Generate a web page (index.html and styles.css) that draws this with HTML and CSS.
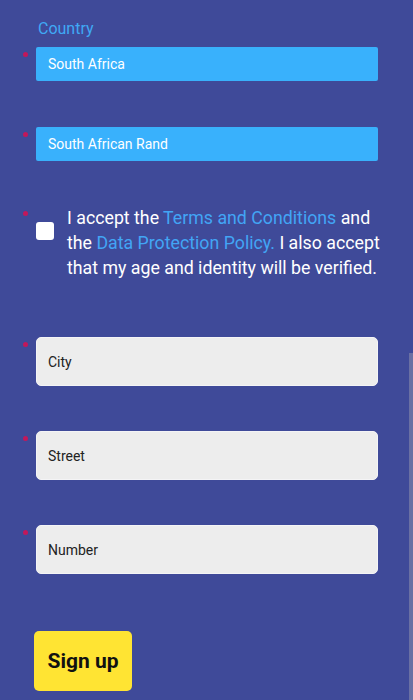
FILE: index.html
```html
<!DOCTYPE html>
<html lang="en">
<head>
    <meta charset="UTF-8">
    <meta name="viewport" content="width=device-width, initial-scale=1.0">
    <title>Sign up</title>
    <link rel="stylesheet" href="styles.css">
</head>
<body>
    <form class="signup-form">
        <label class="field-label">Country</label>
        <div class="field required">
            <select class="select">
                <option>South Africa</option>
            </select>
        </div>
        <div class="field required spaced">
            <select class="select">
                <option>South African Rand</option>
            </select>
        </div>
        <div class="field required terms">
            <input type="checkbox" class="checkbox">
            <p>I accept the <a href="#">Terms and Conditions</a> and the <a href="#">Data Protection Policy.</a> I also accept that my age and identity will be verified.</p>
        </div>
        <div class="field required city">
            <input type="text" class="input" value="City">
        </div>
        <div class="field required next">
            <input type="text" class="input" value="Street">
        </div>
        <div class="field required next">
            <input type="text" class="input" value="Number">
        </div>
        <button type="button" class="signup">Sign up</button>
    </form>
    <div class="scroll-thumb"></div>
</body>
</html>
```

FILE: styles.css
```css
body {
    margin: 0;
    background-color: #3f4a99;
    font-family: Roboto, 'Liberation Sans', sans-serif;
    color: #fff;
    overflow: hidden;
}
.signup-form {
    padding: 19px 35px 0 36px;
}
.field-label {
    display: block;
    height: 20px;
    line-height: 20px;
    margin-bottom: 8px;
    padding-left: 2px;
    font-size: 16px;
    color: #3fa9f5;
}
.field {
    position: relative;
}
.required::before {
    content: '';
    position: absolute;
    left: -13px;
    top: 5px;
    width: 5px;
    height: 5px;
    border-radius: 50%;
    background-color: #c2185b;
}
.spaced {
    margin-top: 46px;
}
.select {
    display: block;
    width: 100%;
    height: 34px;
    margin: 0;
    padding: 0 12px;
    border: none;
    border-radius: 2px;
    background-color: #39b1fc;
    color: #fff;
    font-family: inherit;
    font-size: 14px;
    appearance: none;
    -webkit-appearance: none;
    outline: none;
}
.terms {
    display: flex;
    gap: 13px;
    margin-top: 45px;
    margin-right: -8px;
}
.checkbox {
    flex: none;
    width: 18px;
    height: 18px;
    margin: 16px 0 0;
    border-radius: 3px;
    background-color: #fff;
    appearance: none;
    -webkit-appearance: none;
}
.terms p {
    margin: 0;
    font-size: 17.75px;
    line-height: 25px;
}
.terms a {
    color: #42a5f5;
    text-decoration: none;
}
.city {
    margin-top: 56px;
}
.next {
    margin-top: 45px;
}
.input {
    display: block;
    width: 100%;
    height: 49px;
    margin: 0;
    padding: 0 11px;
    box-sizing: border-box;
    border: 1px solid #f4f4f6;
    border-radius: 5px;
    background-color: #ededed;
    color: #222;
    font-family: inherit;
    font-size: 14px;
    outline: none;
}
.signup {
    display: block;
    width: 98px;
    height: 60px;
    margin: 57px 0 0 -2px;
    padding: 0;
    border: none;
    border-radius: 5px;
    background-color: #ffe433;
    color: #111;
    font-family: inherit;
    font-size: 21px;
    font-weight: bold;
}
.scroll-thumb {
    position: fixed;
    right: 0;
    top: 353px;
    bottom: 0;
    width: 4px;
    background-color: #6a70a3;
}
```
